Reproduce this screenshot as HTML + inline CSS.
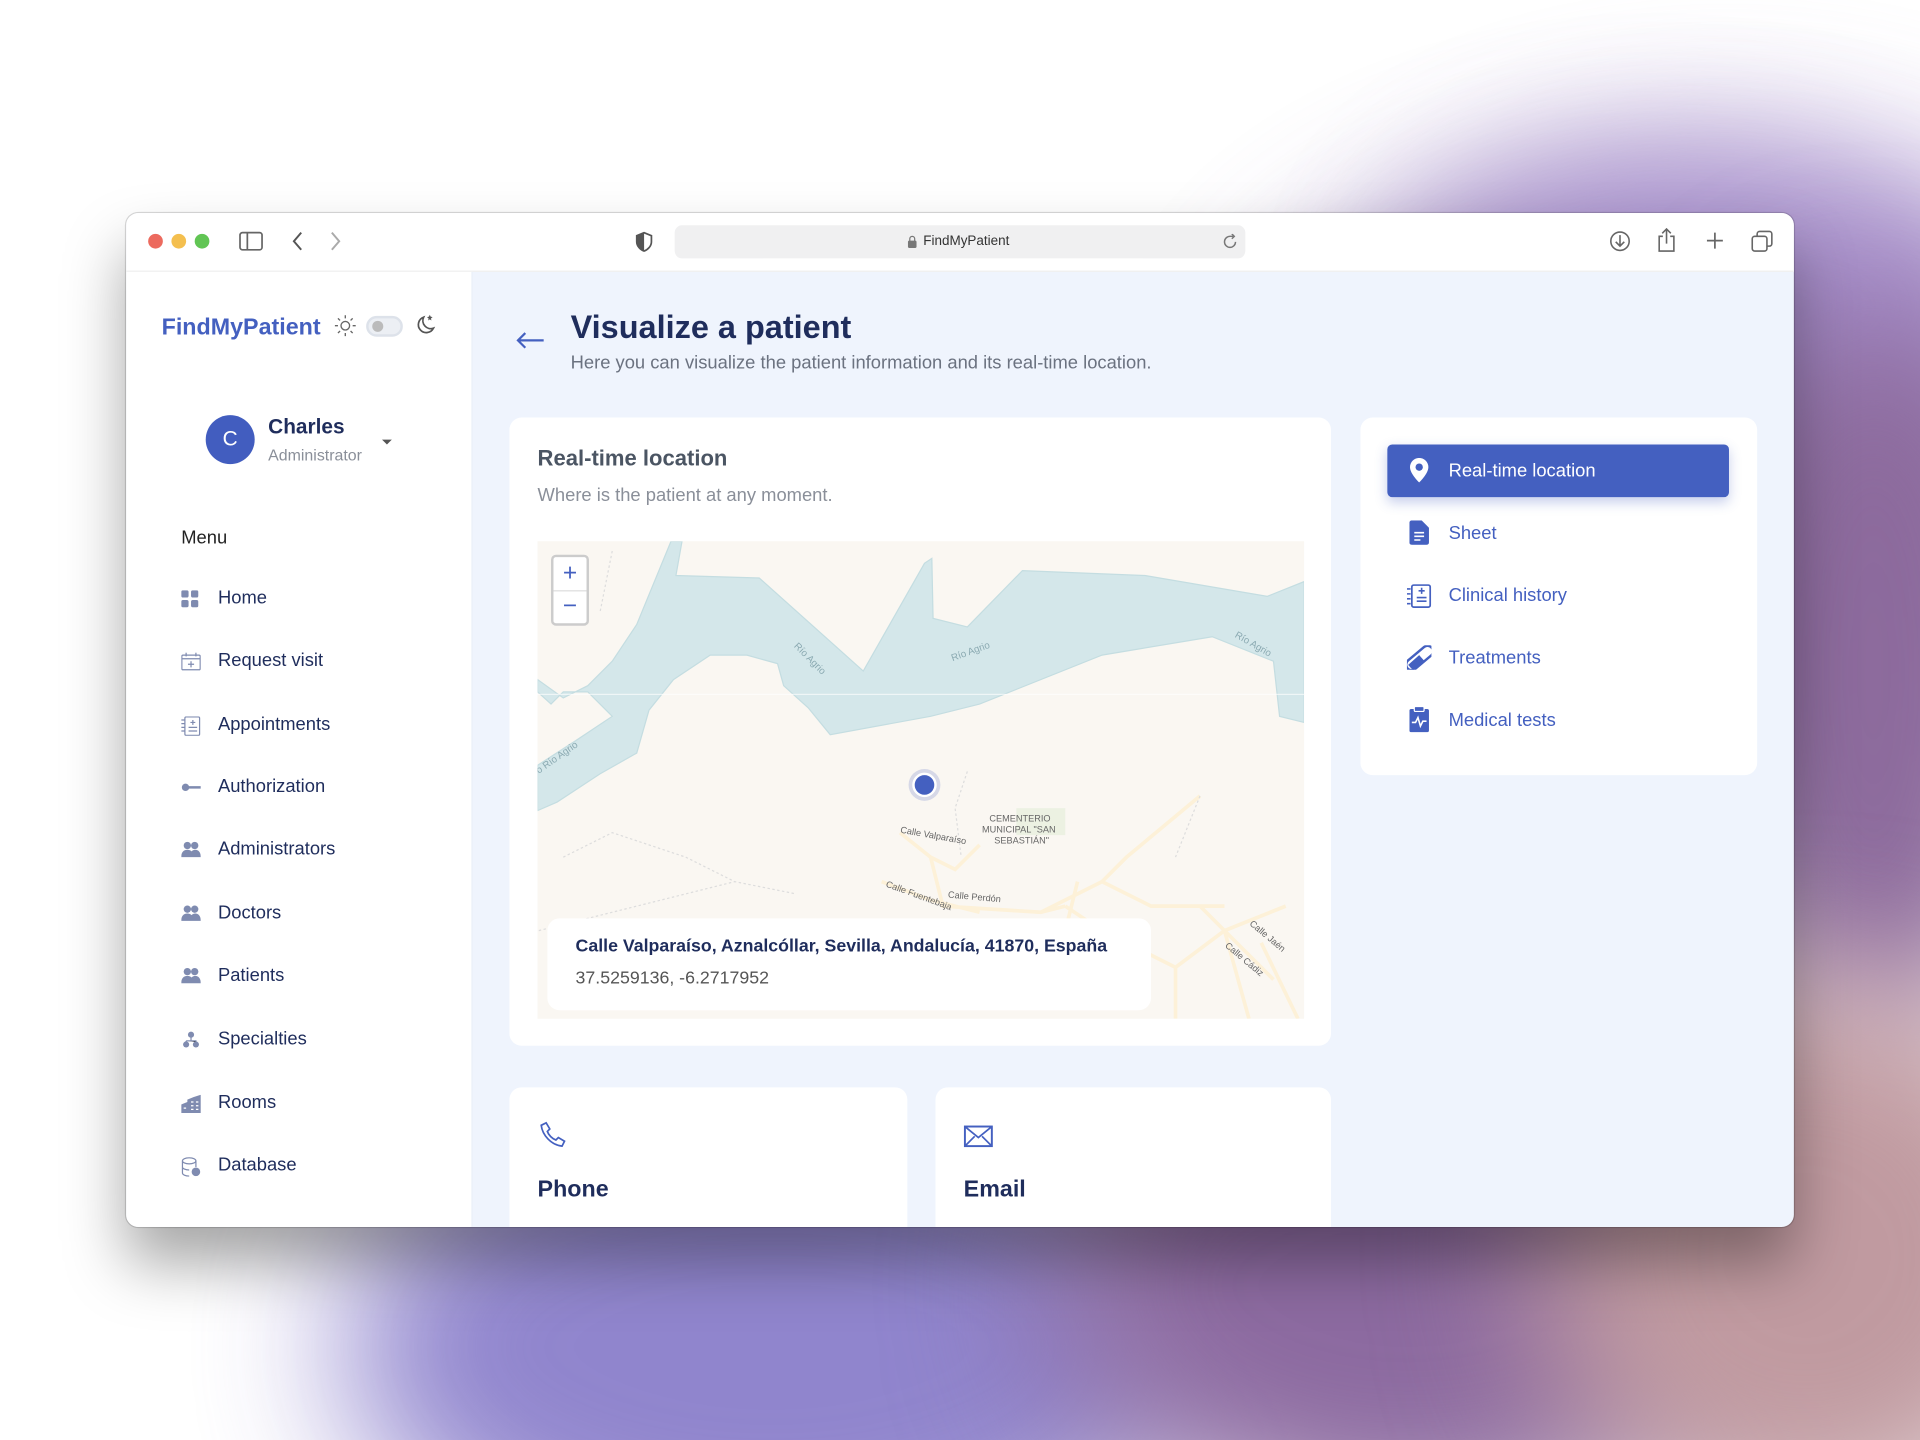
<!DOCTYPE html>
<html><head><meta charset="utf-8"><style>
*{margin:0;padding:0;box-sizing:border-box}
html,body{width:1920px;height:1440px;overflow:hidden;background:#fff;font-family:"Liberation Sans",sans-serif}
#s{position:absolute;left:0;top:0;width:1568px;height:1176px;transform:scale(1.22449);transform-origin:0 0;overflow:hidden;background:#fff}
#bgw{position:absolute;left:0;top:0;width:1568px;height:1176px;overflow:hidden}
.bg{position:absolute;filter:blur(60px);border-radius:50%}
.abs{position:absolute}
.win{position:absolute;left:103px;top:174px;width:1362px;height:828px;border-radius:10px;overflow:hidden;background:#eff4fd;box-shadow:0 30px 50px rgba(0,0,0,.35),0 0 0 1px rgba(0,0,0,.15)}
.tb{position:absolute;left:0;top:0;width:1362px;height:48px;background:#fff;border-bottom:1px solid #eee}
.side{position:absolute;left:0;top:48px;width:283px;height:780px;background:#fff;border-right:1px solid #e9eef8}
.mi{position:absolute;left:45px;font-size:15px;color:#1f2d5c;height:20px;line-height:20px}
.mi span{position:absolute;left:30px;top:0;white-space:nowrap}
.mi svg{position:absolute;left:0;top:3px}
.card{position:absolute;background:#fff;border-radius:10px}
.ri{position:absolute;left:72px;font-size:15px;color:#4460c0;line-height:20px}
</style></head><body><div id="s">
<div id="bgw">
<div class="bg" style="left:1000px;top:140px;width:700px;height:500px;background:#8a6fb0;opacity:.8"></div>
<div class="bg" style="left:1150px;top:120px;width:520px;height:260px;background:#a890d0;opacity:.8"></div>
<div class="bg" style="left:1380px;top:250px;width:300px;height:600px;background:#8c6a9c"></div>
<div class="bg" style="left:280px;top:900px;width:700px;height:400px;background:#8478c8;opacity:.9"></div>
<div class="bg" style="left:850px;top:850px;width:600px;height:400px;background:#8c6aa0"></div>
<div class="bg" style="left:1250px;top:800px;width:450px;height:450px;background:#c09aa0"></div>
</div>

<div class="win">
 <div class="tb">
  <div class="abs" style="left:18px;top:17px;width:12px;height:12px;border-radius:50%;background:#ec6a5e"></div>
  <div class="abs" style="left:37px;top:17px;width:12px;height:12px;border-radius:50%;background:#f4bf4f"></div>
  <div class="abs" style="left:56px;top:17px;width:12px;height:12px;border-radius:50%;background:#61c554"></div>
  <svg class="abs" style="left:92px;top:15px" width="20" height="16"><rect x="1" y="1" width="18" height="14" rx="2" fill="none" stroke="#666" stroke-width="1.4"/><line x1="7" y1="1" x2="7" y2="15" stroke="#666" stroke-width="1.4"/></svg>
  <svg class="abs" style="left:134px;top:14px" width="12" height="18"><path d="M9 2L3 9l6 7" fill="none" stroke="#555" stroke-width="1.6"/></svg>
  <svg class="abs" style="left:165px;top:14px" width="12" height="18"><path d="M3 2l6 7-6 7" fill="none" stroke="#aaa" stroke-width="1.6"/></svg>
  <svg class="abs" style="left:416px;top:15px" width="14" height="17"><path d="M7 1L1 3.5v5C1 12 4 15 7 16c3-1 6-4 6-7.5v-5z" fill="none" stroke="#555" stroke-width="1.4"/><path d="M7 1v15c-3-1-6-4-6-7.5v-5z" fill="#555"/></svg>
  <div class="abs" style="left:448px;top:10px;width:466px;height:27px;border-radius:6px;background:#f0f0f1"></div>
  <svg class="abs" style="left:638px;top:18px" width="8" height="11"><rect x="0.5" y="4.5" width="7" height="6" rx="1" fill="#777"/><path d="M2 5V3a2 2 0 014 0v2" fill="none" stroke="#777"/></svg>
  <div class="abs" style="left:651px;top:17px;font-size:11px;color:#333">FindMyPatient</div>
  <svg class="abs" style="left:895px;top:17px" width="13" height="13"><path d="M11 6.5A4.5 4.5 0 116.5 2H9" fill="none" stroke="#777" stroke-width="1.2"/><path d="M8 0l2 2-2 2" fill="none" stroke="#777" stroke-width="1.2"/></svg>
  <svg class="abs" style="left:1211px;top:14px" width="18" height="18"><circle cx="9" cy="9" r="7.5" fill="none" stroke="#666" stroke-width="1.3"/><path d="M9 4v9M5.5 9.5L9 13l3.5-3.5" fill="none" stroke="#666" stroke-width="1.3"/></svg>
  <svg class="abs" style="left:1250px;top:12px" width="16" height="20"><path d="M5 7H2v12h12V7h-3M8 1v12M4.5 4.5L8 1l3.5 3.5" fill="none" stroke="#666" stroke-width="1.3"/></svg>
  <svg class="abs" style="left:1290px;top:15px" width="15" height="15"><path d="M7.5 1v13M1 7.5h13" stroke="#666" stroke-width="1.4"/></svg>
  <svg class="abs" style="left:1327px;top:14px" width="18" height="18"><rect x="1" y="5" width="12" height="12" rx="2" fill="none" stroke="#666" stroke-width="1.3"/><path d="M5 5V3a2 2 0 012-2h8a2 2 0 012 2v8a2 2 0 01-2 2h-2" fill="none" stroke="#666" stroke-width="1.3"/></svg>
 </div>

 <div class="side">
  <div class="abs" style="left:29px;top:35px;font-size:19px;font-weight:bold;color:#4460c0">FindMyPatient</div>
  <svg class="abs" style="left:170px;top:35px" width="18" height="18"><circle cx="9" cy="9" r="3.5" fill="none" stroke="#666" stroke-width="1.1"/><g stroke="#666" stroke-width="1.1"><path d="M9 0.5v2.5M9 15v2.5M0.5 9H3M15 9h2.5M3 3l1.7 1.7M13.3 13.3L15 15M3 15l1.7-1.7M13.3 4.7L15 3"/></g></svg>
  <div class="abs" style="left:196px;top:36px;width:30px;height:17px;border-radius:9px;background:#eceff4;border:2px solid #dde2ea"></div>
  <div class="abs" style="left:201px;top:40px;width:9px;height:9px;border-radius:50%;background:#bbb"></div>
  <svg class="abs" style="left:235px;top:34px" width="18" height="18"><path d="M8 3a6.5 6.5 0 108 9A6.5 6.5 0 018 3z" fill="none" stroke="#555" stroke-width="1.4"/><path d="M13 1l.7 1.6 1.6.4-1.3 1 .3 1.7-1.3-.9-1.3.9.3-1.7-1.3-1 1.6-.4z" fill="#555"/></svg>
  <div class="abs" style="left:65px;top:117px;width:40px;height:40px;border-radius:50%;background:#425dbf;color:#fff;font-size:17px;text-align:center;line-height:40px">C</div>
  <div class="abs" style="left:116px;top:117px;font-size:17px;font-weight:bold;color:#1f2d5c">Charles</div>
  <div class="abs" style="left:116px;top:142px;font-size:13px;color:#8a8f99">Administrator</div>
  <div class="abs" style="left:209px;top:137px;width:0;height:0;border-left:4px solid transparent;border-right:4px solid transparent;border-top:4px solid #555"></div>
  <div class="abs" style="left:45px;top:209px;font-size:15px;color:#222">Menu</div>

  <div class="mi" style="top:257px"><svg width="14" height="14"><rect x="0" y="0" width="6" height="6" rx="1.5" fill="#7f8bb0"/><rect x="8" y="0" width="6" height="6" rx="1.5" fill="#7f8bb0"/><rect x="0" y="8" width="6" height="6" rx="1.5" fill="#7f8bb0"/><rect x="8" y="8" width="6" height="6" rx="1.5" fill="#7f8bb0"/></svg><span>Home</span></div>
  <div class="mi" style="top:308px"><svg width="16" height="15"><rect x="0.5" y="2" width="15" height="12" rx="1" fill="none" stroke="#7f8bb0"/><path d="M0.5 5h15M4 0v3M12 0v3M8 7v5M5.5 9.5h5" stroke="#7f8bb0"/></svg><span>Request visit</span></div>
  <div class="mi" style="top:360px"><svg width="16" height="16"><rect x="3" y="0.5" width="12" height="15" rx="1" fill="none" stroke="#7f8bb0"/><path d="M0 3h3M0 6h3M0 9h3M0 12h3M6 9h7M6 12h7M9.5 3v4M7.5 5h4" stroke="#7f8bb0"/></svg><span>Appointments</span></div>
  <div class="mi" style="top:411px"><svg width="16" height="14"><circle cx="3.5" cy="7" r="3" fill="#7f8bb0"/><path d="M6 7h10" stroke="#7f8bb0" stroke-width="2"/></svg><span>Authorization</span></div>
  <div class="mi" style="top:462px"><svg width="16" height="14"><circle cx="5" cy="3.5" r="3" fill="#7f8bb0"/><circle cx="11" cy="3.5" r="3" fill="#7f8bb0"/><path d="M0 13c0-4 2-6 5-6s5 2 5 6zM7 13c0-4 2-6 4.5-6s4.5 2 4.5 6z" fill="#7f8bb0"/></svg><span>Administrators</span></div>
  <div class="mi" style="top:514px"><svg width="16" height="14"><circle cx="5" cy="3.5" r="3" fill="#7f8bb0"/><circle cx="11" cy="3.5" r="3" fill="#7f8bb0"/><path d="M0 13c0-4 2-6 5-6s5 2 5 6zM7 13c0-4 2-6 4.5-6s4.5 2 4.5 6z" fill="#7f8bb0"/></svg><span>Doctors</span></div>
  <div class="mi" style="top:565px"><svg width="16" height="14"><circle cx="5" cy="3.5" r="3" fill="#7f8bb0"/><circle cx="11" cy="3.5" r="3" fill="#7f8bb0"/><path d="M0 13c0-4 2-6 5-6s5 2 5 6zM7 13c0-4 2-6 4.5-6s4.5 2 4.5 6z" fill="#7f8bb0"/></svg><span>Patients</span></div>
  <div class="mi" style="top:617px"><svg width="16" height="14"><circle cx="8" cy="3" r="2.5" fill="#7f8bb0"/><circle cx="4" cy="11" r="2.5" fill="#7f8bb0"/><circle cx="12" cy="11" r="2.5" fill="#7f8bb0"/><path d="M8 5v3M4 8h8v1M4 8v1" stroke="#7f8bb0"/></svg><span>Specialties</span></div>
  <div class="mi" style="top:669px"><svg width="16" height="15"><path d="M0 15V8l5-2V4l5-2 6-2v15z" fill="#7f8bb0"/><path d="M8 6h2M12 6h2M8 9h2M12 9h2M8 12h2M12 12h2M2 11h2" stroke="#fff"/></svg><span>Rooms</span></div>
  <div class="mi" style="top:720px"><svg width="16" height="16"><ellipse cx="6.5" cy="3" rx="5.5" ry="2.5" fill="none" stroke="#7f8bb0"/><path d="M1 3v10c0 1.4 2.5 2.5 5.5 2.5M12 3v5M1 8c0 1.4 2.5 2.5 5.5 2.5" fill="none" stroke="#7f8bb0"/><circle cx="12" cy="12" r="3.5" fill="#7f8bb0"/></svg><span>Database</span></div>
 </div>

 <svg class="abs" style="left:318px;top:97px" width="24" height="14"><path d="M23 7H2M8 1L2 7l6 6" fill="none" stroke="#4460c0" stroke-width="1.8"/></svg>
 <div class="abs" style="left:363px;top:78px;font-size:26.5px;font-weight:bold;color:#1f2d5c">Visualize a patient</div>
 <div class="abs" style="left:363px;top:114px;font-size:15px;color:#6b7280">Here you can visualize the patient information and its real-time location.</div>

 <div class="card" style="left:313px;top:167px;width:671px;height:513px">
  <div class="abs" style="left:23px;top:23px;font-size:18px;font-weight:bold;color:#4b5563">Real-time location</div>
  <div class="abs" style="left:23px;top:55px;font-size:15px;color:#8a8f99">Where is the patient at any moment.</div>
  <div class="abs" style="left:23px;top:101px;width:626px;height:390px;overflow:hidden;background:#faf7f2">
   <svg width="626" height="390" viewBox="439 442 626 390" style="position:absolute;left:0;top:0">
    <path d="M548 442L557 442 552 470 620 472 705 548 755 460 761 456 762 505 790 512 835 466 935 470 1035 487 1065 475 1065 590 1045 585 1040 540 990 520 900 535 800 575 760 585 678 600 660 578 640 560 635 542 610 535 580 535 550 555 530 580 520 615 490 632 455 655 439 662 439 625 470 605 500 585 480 565 460 565 450 575 439 565 439 555 460 570 480 560 500 540 520 510z" fill="#d4e7ea" stroke="#c4dde1" stroke-width="1"/>
    <line x1="439" y1="567" x2="1065" y2="567" stroke="#fff" stroke-width="0.6"/>
    <g fill="none" stroke="#fdf1d8" stroke-width="3">
     <path d="M735 680L760 700 780 710 800 690M760 700L770 740 850 745 870 740M720 720L760 735 800 745M850 745L900 720 920 700 980 650M870 740L900 760 960 790 1000 760 1050 740M980 740L1040 800M960 790L960 832M1000 760L1020 832M1030 770L1060 832M880 720L870 760M900 720L940 740 1000 740"/>
    </g>
    <g fill="none" stroke="#ddd" stroke-width="1" stroke-dasharray="2 2">
     <path d="M790 630L780 660 785 700M460 700L500 680 560 700 600 720 650 730M440 760L520 740 600 720M980 650L960 700M500 450L490 500"/>
    </g>
    <rect x="830" y="660" width="40" height="22" fill="#e6eedb" opacity=".7"/>
    <g font-family="Liberation Sans,sans-serif" font-size="8" fill="#8aa9b1">
     <text x="648" y="528" transform="rotate(45 648 528)">Río Agrio</text>
     <text x="778" y="540" transform="rotate(-20 778 540)">Río Agrio</text>
     <text x="1008" y="520" transform="rotate(30 1008 520)">Río Agrio</text>
     <text x="440" y="632" transform="rotate(-35 440 632)">o Río Agrio</text>
    </g>
    <g font-family="Liberation Sans,sans-serif" font-size="7.5" fill="#666">
     <text x="808" y="671">CEMENTERIO</text><text x="802" y="680">MUNICIPAL "SAN</text><text x="812" y="689">SEBASTIÁN"</text>
     <text x="735" y="680" transform="rotate(10 735 680)">Calle Valparaíso</text>
     <text x="723" y="724" transform="rotate(20 723 724)">Calle Fuentebaja</text>
     <text x="774" y="733" transform="rotate(5 774 733)">Calle Perdón</text>
     <text x="1020" y="755" transform="rotate(40 1020 755)">Calle Jaén</text>
     <text x="1000" y="773" transform="rotate(40 1000 773)">Calle Cádiz</text>
    </g>
    <circle cx="755" cy="641" r="13" fill="#4460c0" opacity=".2"/>
    <circle cx="755" cy="641" r="9" fill="#4460c0" stroke="#fff" stroke-width="2"/>
   </svg>
   <div class="abs" style="left:11px;top:11px;width:31px;height:58px;background:#fff;border:2px solid #ccc;border-radius:4px"></div>
   <div class="abs" style="left:13px;top:40px;width:27px;height:1px;background:#ddd"></div>
   <div class="abs" style="left:13px;top:13px;width:27px;height:27px;text-align:center;line-height:27px;font-size:20px;color:#4460c0">+</div>
   <div class="abs" style="left:13px;top:41px;width:27px;height:27px;text-align:center;line-height:25px;font-size:20px;color:#4460c0">−</div>
   <div class="abs" style="left:8px;top:308px;width:493px;height:75px;background:#fff;border-radius:10px">
    <div class="abs" style="left:23px;top:15px;font-size:14.5px;font-weight:bold;color:#1f2d5c;white-space:nowrap">Calle Valparaíso, Aznalcóllar, Sevilla, Andalucía, 41870, España</div>
    <div class="abs" style="left:23px;top:41px;font-size:14.5px;color:#555">37.5259136, -6.2717952</div>
   </div>
  </div>
 </div>

 <div class="card" style="left:1008px;top:167px;width:324px;height:292px">
  <div class="abs" style="left:22px;top:22px;width:279px;height:43px;background:#4460c0;border-radius:4px;box-shadow:0 4px 10px rgba(68,96,192,.3)"></div>
  <svg class="abs" style="left:40px;top:33px" width="16" height="21"><path d="M8 0a7.5 7.5 0 00-7.5 7.5C.5 13 8 20 8 20s7.5-7 7.5-12.5A7.5 7.5 0 008 0z" fill="#fff"/><circle cx="8" cy="7.5" r="3" fill="#4460c0"/></svg>
  <div class="ri" style="top:34px;color:#fff">Real-time location</div>
  <svg class="abs" style="left:40px;top:84px" width="16" height="20"><path d="M2 0h8l6 6v12a2 2 0 01-2 2H2a2 2 0 01-2-2V2a2 2 0 012-2z" fill="#4460c0"/><path d="M4 10h8M4 13h8M4 16h5" stroke="#fff" stroke-width="1.3"/></svg>
  <div class="ri" style="top:85px">Sheet</div>
  <svg class="abs" style="left:38px;top:136px" width="20" height="20"><rect x="4" y="0.8" width="15" height="18" rx="1.5" fill="none" stroke="#4460c0" stroke-width="1.4"/><path d="M0 4h3M0 8h3M0 12h3M0 16h3M8 11h8M8 14h8M12 3v5M9.5 5.5h5" stroke="#4460c0" stroke-width="1.3"/></svg>
  <div class="ri" style="top:136px">Clinical history</div>
  <svg class="abs" style="left:38px;top:186px" width="20" height="20"><rect x="-3" y="6" width="26" height="9" rx="4.5" transform="rotate(-40 10 10)" fill="none" stroke="#4460c0" stroke-width="2"/><path d="M1 16l9-8 4 4.5-9 8z" fill="#4460c0"/></svg>
  <div class="ri" style="top:187px">Treatments</div>
  <svg class="abs" style="left:40px;top:236px" width="16" height="21"><rect x="0" y="2" width="16" height="19" rx="1.5" fill="#4460c0"/><rect x="4" y="0" width="8" height="4" rx="1" fill="#4460c0" stroke="#fff" stroke-width="1"/><path d="M2 13h3l2-4 2 7 2-4h3" fill="none" stroke="#fff" stroke-width="1.3"/></svg>
  <div class="ri" style="top:238px">Medical tests</div>
 </div>

 <div class="card" style="left:313px;top:714px;width:325px;height:200px">
  <svg class="abs" style="left:24px;top:27px" width="24" height="24"><path d="M6 2l3 5-2 2c1 3 4 6 7 7l2-2 5 3-2 4C10 20 3 12 2 4z" fill="none" stroke="#4460c0" stroke-width="1.4"/></svg>
  <div class="abs" style="left:23px;top:73px;font-size:19px;font-weight:bold;color:#1f2d5c">Phone</div>
 </div>
 <div class="card" style="left:661px;top:714px;width:323px;height:200px">
  <svg class="abs" style="left:23px;top:31px" width="24" height="18"><rect x="1" y="1" width="22" height="16" fill="none" stroke="#4460c0" stroke-width="1.6"/><path d="M1 1l11 9 11-9M1 17l8-8M23 17l-8-8" fill="none" stroke="#4460c0" stroke-width="1.4"/></svg>
  <div class="abs" style="left:23px;top:73px;font-size:19px;font-weight:bold;color:#1f2d5c">Email</div>
 </div>
</div>
</div></body></html>
